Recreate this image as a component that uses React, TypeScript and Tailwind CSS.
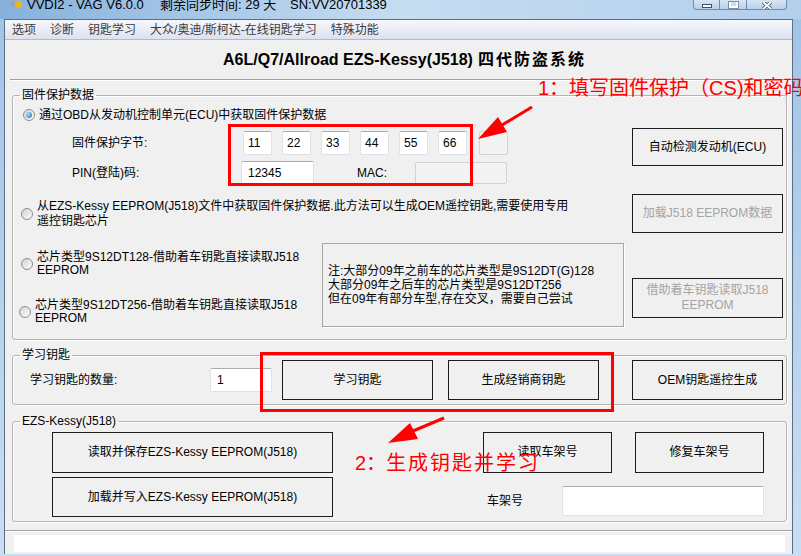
import React from 'react';

type Kids = { children?: React.ReactNode; className?: string };

function Radio({ checked }: { checked?: boolean }) {
  return (
    <span className="w-[12px] h-[12px] shrink-0 rounded-full border border-[#8d8d8d] bg-gradient-to-br from-[#d2d2d2] to-[#fdfdfd] flex items-center justify-center">
      {checked && (
        <span className="w-[6px] h-[6px] rounded-full bg-[radial-gradient(circle_at_35%_35%,#a8e6ff,#1b5fb6)]" />
      )}
    </span>
  );
}

function Btn({ children, className = '', disabled }: Kids & { disabled?: boolean }) {
  return (
    <div
      className={`flex items-center justify-center text-center leading-[15px] border border-[#1c1c1c] bg-[#f0f0f0] ${
        disabled ? 'text-[#a4a4a4]' : 'text-black'
      } ${className}`}
    >
      {children}
    </div>
  );
}

function TextBox({ children, className = '', disabled }: Kids & { disabled?: boolean }) {
  return (
    <div
      className={`flex items-center rounded-[2px] border ${
        disabled ? 'border-[#d2d2d2] bg-[#f3f3f3]' : 'border-[#dde1e8] border-t-[#abadb3] bg-white'
      } ${className}`}
    >
      {children}
    </div>
  );
}

function Group({ title, className = '', legend = 'leading-[14px]', children }: Kids & { title: string; legend?: string }) {
  return (
    <fieldset
      className={`ml-[7px] mr-[5px] border border-[#b3b3b3] rounded-[3px] shadow-[inset_1px_1px_0_#ffffff,1px_1px_0_#ffffff] ${className}`}
    >
      <legend className={`ml-[7px] px-[2px] ${legend}`}>{title}</legend>
      {children}
    </fieldset>
  );
}

const bytes = ['11', '22', '33', '44', '55', '66'];

export default function App() {
  return (
    <div className="relative w-[801px] h-[556px] overflow-hidden bg-gradient-to-b from-[#9fc3e7] to-[#c9def2] font-['Liberation_Sans','Noto_Sans_CJK_SC',sans-serif] text-[12px] text-black">
      {/* Title bar */}
      <div className="h-[19px] flex items-start bg-gradient-to-r from-[#86b1dc] via-[#c6ddf2] to-[#b2cfec] text-[13px] leading-[15px]">
        <span className="ml-[11px] w-[11px] h-[9px] flex items-center">
          <svg width="11" height="9" viewBox="0 0 11 9">
            <rect x="0" y="2" width="7" height="5" rx="1" fill="#9aa3ad" />
            <circle cx="7.5" cy="4.5" r="3.5" fill="#f2b51d" />
          </svg>
        </span>
        <span className="ml-[5px] -mt-[3px] w-[133px]">VVDI2 - VAG V6.0.0</span>
        <span className="-mt-[3px] w-[130px]">剩余同步时间: 29 天</span>
        <span className="-mt-[3px]">SN:VV20701339</span>
        <div className="ml-auto mr-[14px] flex h-[10px]">
          <div className="w-[27px] h-[10px] rounded-bl-[4px] border border-t-0 border-[#6f8cae] bg-gradient-to-b from-[#d7e6f5] to-[#b9d1ea] flex items-end justify-center pb-[1px]">
            <span className="w-[10px] h-[4px] bg-white border border-[#3e4f63]" />
          </div>
          <div className="w-[27px] h-[10px] border border-t-0 border-l-0 border-[#6f8cae] bg-gradient-to-b from-[#d7e6f5] to-[#b9d1ea] flex items-end justify-center pb-[1px]">
            <span className="w-[9px] h-[6px] border-2 border-t-0 border-[#ffffff] outline outline-1 outline-[#7d8fa3]" />
          </div>
          <div className="w-[40px] h-[10px] rounded-br-[4px] border border-t-0 border-l-0 border-[#6f8cae] bg-gradient-to-b from-[#d7e6f5] to-[#b9d1ea] flex items-end justify-center">
            <svg width="12" height="7" viewBox="0 0 12 7">
              <path d="M2 0 L10 7 M10 0 L2 7" stroke="#3e4f63" strokeWidth="3.5" />
              <path d="M2 0 L10 7 M10 0 L2 7" stroke="#ffffff" strokeWidth="2" />
            </svg>
          </div>
        </div>
      </div>

      {/* Client area */}
      <div className="ml-[4px] w-[789px] h-[535px] border border-b-0 border-[#5d6f84] bg-[#f0f0f0] flex flex-col">
        {/* Menu */}
        <div className="h-[20px] shrink-0 flex items-center pt-[1px] bg-gradient-to-b from-[#f6f7fb] to-[#dde2f0] border-b border-[#b6bac6] text-[#3a3a3a]">
          <span className="px-[7px]">选项</span>
          <span className="px-[7px]">诊断</span>
          <span className="px-[7px]">钥匙学习</span>
          <span className="px-[7px]">大众/奥迪/斯柯达-在线钥匙学习</span>
          <span className="px-[7px]">特殊功能</span>
        </div>

        {/* Heading */}
        <div className="h-[39px] shrink-0 flex items-center justify-center text-[16px] font-bold pl-[12px]">
          <span>A6L/Q7/Allroad EZS-Kessy(J518)</span>
          <span className="ml-[5px] tracking-[2px]">四代防盗系统</span>
        </div>
        <div className="ml-[5px] mr-[2px] h-[2px] shrink-0 border-t border-[#a0a0a0] border-b border-b-white" />

        {/* Group: firmware protection */}
        <Group title="固件保护数据" className="mt-[7px] pr-[3px] pb-[12px]">
          <div className="flex items-start">
            <div className="flex-1">
              <div className="mt-[6px] h-[14px] pl-[10px] flex items-center">
                <Radio checked />
                <span className="ml-[4px]">通过OBD从发动机控制单元(ECU)中获取固件保护数据</span>
              </div>
              <div className="mt-[9px] h-[24px] pl-[59px] flex items-center">
                <span className="w-[171px]">固件保护字节:</span>
                <div className="flex gap-[10px]">
                  {bytes.map((b) => (
                    <TextBox key={b} className="w-[29px] h-[24px] pl-[4px]">
                      {b}
                    </TextBox>
                  ))}
                  <TextBox disabled className="w-[29px] h-[24px] ml-[2px]" />
                </div>
              </div>
              <div className="mt-[6px] h-[23px] pl-[59px] flex items-center">
                <span className="w-[169px]">PIN(登陆)码:</span>
                <TextBox className="w-[73px] h-[23px] pl-[6px]">12345</TextBox>
                <span className="ml-[43px] w-[58px]">MAC:</span>
                <TextBox disabled className="w-[92px] h-[22px]" />
              </div>
            </div>
            <Btn className="mt-[26px] w-[151px] h-[38px]">自动检测发动机(ECU)</Btn>
          </div>

          <div className="mt-[10px] flex items-center">
            <div className="flex-1 pl-[8px] flex items-center">
              <Radio />
              <span className="ml-[4px] leading-[15px]">
                从EZS-Kessy EEPROM(J518)文件中获取固件保护数据.此方法可以生成OEM遥控钥匙,需要使用专用
                <br />
                遥控钥匙芯片
              </span>
            </div>
            <Btn disabled className="w-[151px] h-[39px]">
              加载J518 EEPROM数据
            </Btn>
          </div>

          <div className="mt-[10px] flex items-start">
            <div className="w-[309px]">
              <div className="mt-[8px] pl-[8px] flex items-center">
                <Radio />
                <span className="ml-[4px] leading-[13px]">
                  芯片类型9S12DT128-借助着车钥匙直接读取J518
                  <br />
                  EEPROM
                </span>
              </div>
              <div className="mt-[22px] pl-[6px] flex items-center">
                <Radio />
                <span className="ml-[4px] leading-[13px]">
                  芯片类型9S12DT256-借助着车钥匙直接读取J518
                  <br />
                  EEPROM
                </span>
              </div>
            </div>
            <div className="w-[302px] h-[84px] pl-[5px] flex items-center leading-[14px] border border-[#a6a6a6] shadow-[1px_1px_0_#ffffff]">
              <div>
                注:大部分09年之前车的芯片类型是9S12DT(G)128
                <br />
                大部分09年之后车的芯片类型是9S12DT256
                <br />
                但在09年有部分车型,存在交叉，需要自己尝试
              </div>
            </div>
            <Btn disabled className="ml-[8px] mt-[35px] w-[151px] h-[40px]">
              借助着车钥匙读取J518
              <br />
              EEPROM
            </Btn>
          </div>
        </Group>

        {/* Group: learn keys */}
        <Group title="学习钥匙" legend="leading-[12px]" className="mt-[9px] pb-[4px]">
          <div className="-mt-[1px] h-[40px] pl-[17px] flex items-center">
            <span className="w-[180px]">学习钥匙的数量:</span>
            <TextBox className="w-[62px] h-[24px] pl-[6px]">1</TextBox>
            <Btn className="ml-[10px] w-[151px] h-[40px]">学习钥匙</Btn>
            <Btn className="ml-[15px] w-[151px] h-[40px]">生成经销商钥匙</Btn>
            <Btn className="ml-[33px] w-[151px] h-[40px]">OEM钥匙遥控生成</Btn>
          </div>
        </Group>

        {/* Group: EZS-Kessy */}
        <Group title="EZS-Kessy(J518)" className="mt-[9px] pt-[4px] pb-[4px]">
          <div className="flex items-start">
            <div className="ml-[39px] w-[281px] flex flex-col gap-[4px]">
              <Btn className="h-[41px]">读取并保存EZS-Kessy EEPROM(J518)</Btn>
              <Btn className="h-[40px]">加载并写入EZS-Kessy EEPROM(J518)</Btn>
            </div>
            <div className="ml-[150px] w-[281px]">
              <div className="flex gap-[23px]">
                <Btn className="w-[129px] h-[41px]">读取车架号</Btn>
                <Btn className="w-[129px] h-[41px]">修复车架号</Btn>
              </div>
              <div className="mt-[13px] flex items-center">
                <span className="pl-[4px] w-[79px]">车架号</span>
                <TextBox className="w-[202px] h-[30px]" />
              </div>
            </div>
          </div>
        </Group>

        {/* Status bar */}
        <div className="mt-[8px] h-[2px] shrink-0 border-t border-[#a0a0a0] border-b border-b-white" />
        <div className="mt-[3px] ml-[9px] mr-[7px] h-[17px] shrink-0 bg-white" />
      </div>

      {/* Annotations */}
      <div className="absolute left-[228px] top-[124px] w-[245px] h-[62px] border-[3px] border-[#ff0000] pointer-events-none" />
      <div className="absolute left-[260px] top-[352px] w-[354px] h-[60px] border-[3px] border-[#ff0000] pointer-events-none" />
      <svg className="absolute left-0 top-0 pointer-events-none" width="801" height="556" viewBox="0 0 801 556">
        <line x1="532" y1="107" x2="502" y2="125" stroke="#ff0000" strokeWidth="3" />
        <polygon points="478,139 507,132 498,117" fill="#ff0000" />
        <line x1="444" y1="418" x2="413" y2="431" stroke="#ff0000" strokeWidth="3" />
        <polygon points="388,443 418,439 410,423" fill="#ff0000" />
      </svg>
      <div className="absolute left-[538px] top-[75px] text-[20px] leading-[26px] text-[#ff0000] whitespace-nowrap">
        1：填写固件保护（CS)和密码
      </div>
      <div className="absolute left-[355px] top-[450px] text-[20px] leading-[26px] text-[#ff0000] whitespace-nowrap">
        2：<span className="tracking-[2px]">生成钥匙并学习</span>
      </div>
    </div>
  );
}
